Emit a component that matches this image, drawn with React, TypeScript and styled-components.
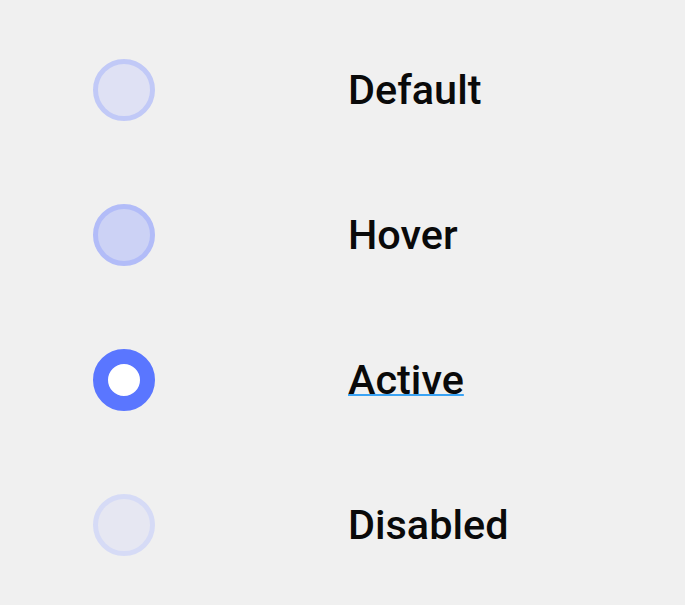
import styled, { createGlobalStyle } from 'styled-components'

const GlobalStyle = createGlobalStyle`
  html, body { margin: 0; padding: 0; background: #f0f0f0; }
  body { font-family: Roboto, "Noto Sans", sans-serif; }
`

type State = 'default' | 'hover' | 'active' | 'disabled'

const RadioFill: Record<State, string> = {
  default: '#dfe1f4',
  hover: '#ccd2f5',
  active: '#ffffff',
  disabled: '#e6e7f2',
}

const RadioBorder: Record<State, string> = {
  default: '#c1c9f7',
  hover: '#b2bcf8',
  active: '#5a76ff',
  disabled: '#d6dbf6',
}

const List = styled.div`
  display: flex;
  flex-direction: column;
  padding: 59px 0 0 93px;
  gap: 83px;
`

const Row = styled.div`
  display: flex;
  align-items: center;
  height: 62px;
`

const Radio = styled.span<{ $state: State }>`
  box-sizing: border-box;
  width: 62px;
  height: 62px;
  border-radius: 50%;
  flex-shrink: 0;
  border: ${p => (p.$state === 'active' ? '15px' : '5px')} solid ${p => RadioBorder[p.$state]};
  background-color: ${p => RadioFill[p.$state]};
`

const Label = styled.span<{ $underline?: boolean }>`
  margin-left: 193px;
  font-size: 41.4px;
  font-weight: 500;
  color: #0a0a0a;
  text-decoration: ${p => (p.$underline ? 'underline' : 'none')};
  text-decoration-color: #3aa3f4;
  text-decoration-thickness: 2px;
  text-underline-offset: 0px;
`

const items: { state: State; label: string }[] = [
  { state: 'default', label: 'Default' },
  { state: 'hover', label: 'Hover' },
  { state: 'active', label: 'Active' },
  { state: 'disabled', label: 'Disabled' },
]

export default function App() {
  return <>
    <GlobalStyle />
    <List>
      {items.map(it => (
        <Row key={it.state}>
          <Radio $state={it.state} />
          <Label $underline={it.state === 'active'}>{it.label}</Label>
        </Row>
      ))}
    </List>
  </>
}
